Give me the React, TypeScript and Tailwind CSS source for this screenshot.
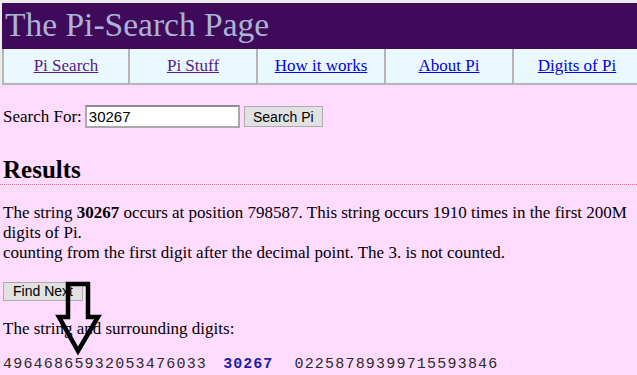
import React from "react";

const NAV = [
  { label: "Pi Search", visited: true },
  { label: "Pi Stuff", visited: true },
  { label: "How it works", visited: false },
  { label: "About Pi", visited: false },
  { label: "Digits of Pi", visited: false },
];

const serif = "font-['Liberation_Serif','Times_New_Roman',serif]";
const sans = "font-['Liberation_Sans',Arial,sans-serif]";
const mono = "font-['Liberation_Mono','Courier_New',monospace]";

function DownArrow() {
  return (
    <svg
      className="absolute left-[54px] top-[279px]"
      width="50"
      height="78"
      viewBox="0 0 50 78"
      fill="none"
    >
      <path
        d="M14 5 L34 5 L34 38 L44 38 L24 72 L5 38 L14 38 Z"
        stroke="#000"
        strokeWidth="4.5"
        strokeLinejoin="miter"
      />
    </svg>
  );
}

export default function App() {
  return (
    <div className={`relative w-[637px] h-[375px] overflow-hidden bg-[#ffdcff] text-black ${serif}`}>
      {/* banner + menu table */}
      <div className="bg-[#ececec] pt-[3px] pl-[2px] w-[660px]">
        <div className="h-[46px] bg-[#400a5a] flex items-center pl-[3px]">
          <h1 className="text-[33.5px] leading-none text-[#aab4d6] pb-[2px]">The Pi-Search Page</h1>
        </div>
        <div className="flex bg-[#eaf8ff]">
          {NAV.map((n, i) => (
            <div
              key={n.label}
              className={`w-[128px] shrink-0 h-[36px] flex items-center justify-center border-b-2 border-r-2 border-[#b5b5b5] ${
                i === 0 ? "border-l-2" : ""
              }`}
            >
              <a
                href="#"
                className={`text-[17px] underline ${n.visited ? "text-[#551a8b]" : "text-[#0000ee]"}`}
              >
                {n.label}
              </a>
            </div>
          ))}
        </div>
      </div>

      <div className="pl-[3px] pt-[19px]">
        <form className="flex items-center gap-[4px] text-[17px]">
          <span className="mr-[-1px]">Search For:</span>
          <input
            defaultValue="30267"
            className={`w-[155px] h-[23px] bg-white border-2 border-[#a9a9a9] border-t-[#8d8d8d] px-[2px] text-[15px] ${sans} outline-none`}
          />
          <button
            type="button"
            className={`h-[21px] w-[79px] bg-[#e1e1e1] border border-[#adadad] text-[14px] ${sans}`}
          >
            Search Pi
          </button>
        </form>

        <h2 className="mt-[26px] text-[25px] font-bold leading-[28px]">Results</h2>
      </div>
      <div className="border-t border-dotted border-[#f0708c]" />

      <div className="pl-[3px]">
        <p className="mt-[18px] text-[17px] leading-[20px]">
          The string <b>30267</b> occurs at position 798587. This string occurs 1910 times in the first
          200M digits of Pi.
          <br />
          counting from the first digit after the decimal point. The 3. is not counted.
        </p>

        <button
          type="button"
          className={`mt-[19px] h-[19px] w-[80px] bg-[#e1e1e1] border border-[#adadad] text-[14px] leading-none ${sans}`}
        >
          Find Next
        </button>

        <p className="mt-[16px] text-[17px] leading-[20px]">The string and surrounding digits:</p>

        <p className={`mt-[17px] text-[15px] tracking-[1.2px] leading-[18px] text-[#2a2a2a] whitespace-pre ${mono}`}>
          {"49646865932053476033 "}
          <b className="ml-[6px] mr-[11px] text-[#1c1ca6] tracking-[1px]">30267</b>
          {" 02258789399715593846"}
        </p>
      </div>

      <DownArrow />
    </div>
  );
}
